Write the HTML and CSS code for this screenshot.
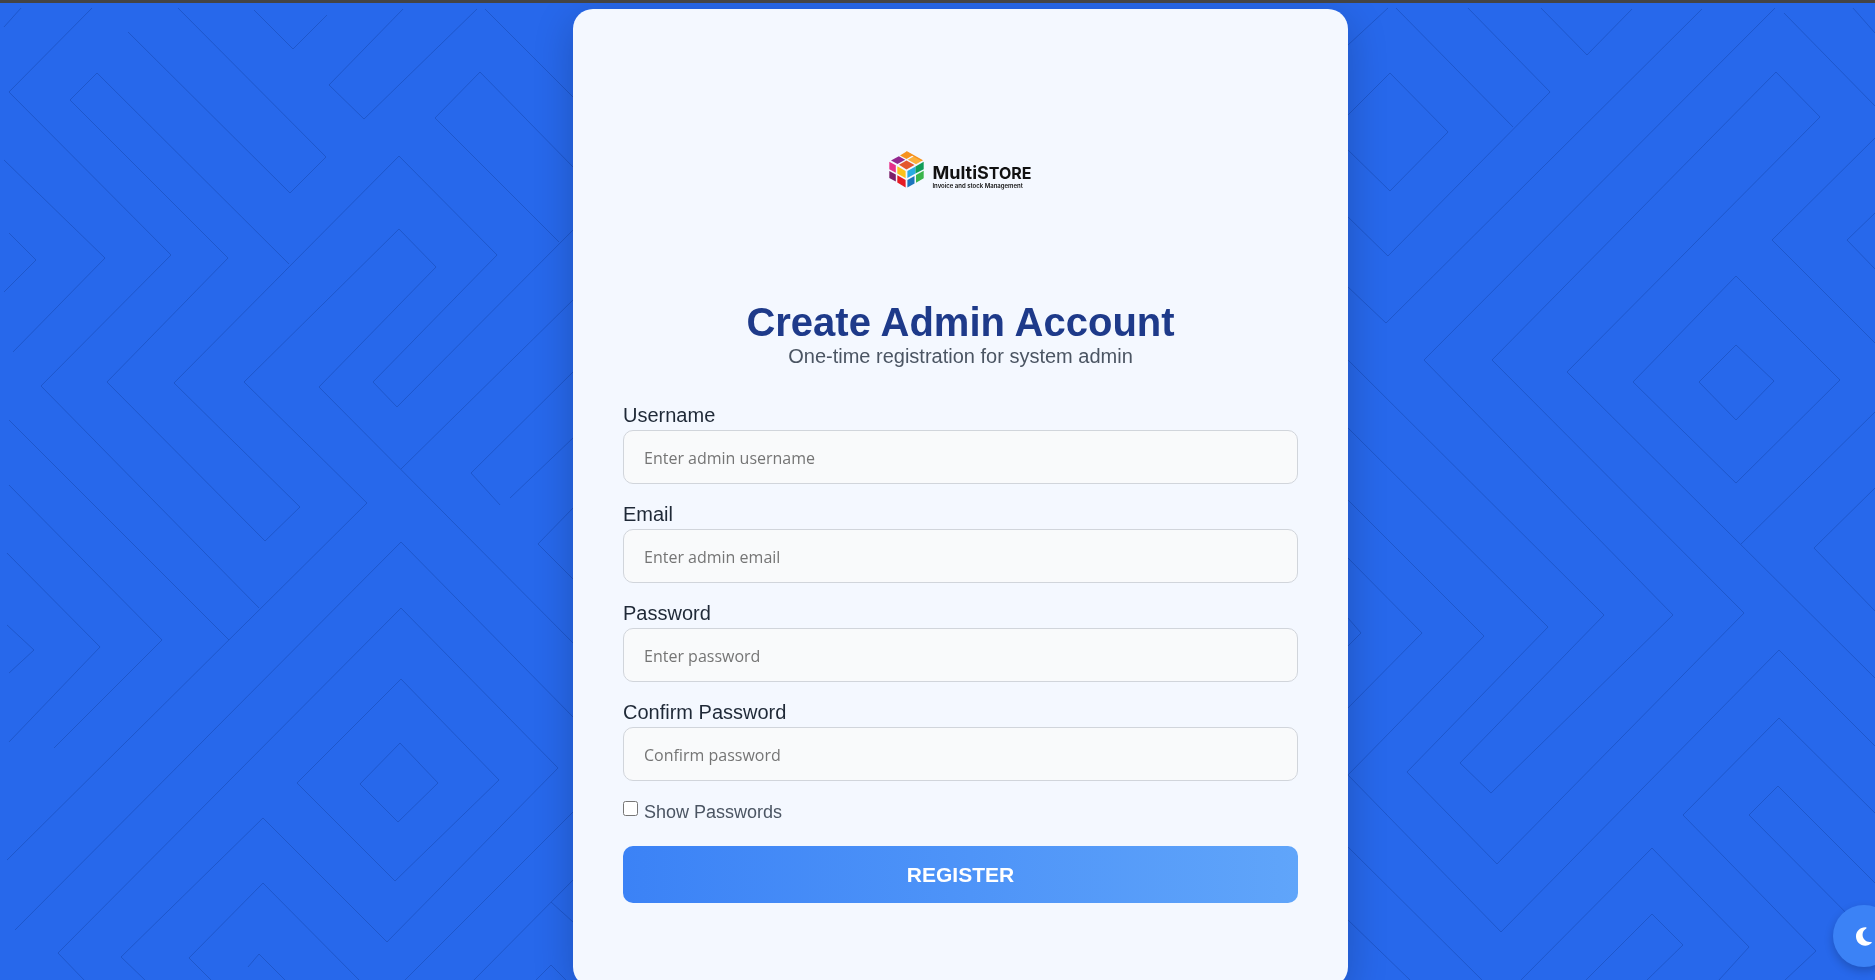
FILE: index.html
```
<!DOCTYPE html>
<html lang="en">
<head>
  <meta charset="UTF-8">
  <meta name="viewport" content="width=device-width, initial-scale=1.0">
  <title>Create Admin Account</title>
  <link rel="stylesheet" href="styles.css">
</head>
<body>
  <!-- Background maze pattern -->
  <svg class="pattern" viewBox="0 0 1875 980" preserveAspectRatio="xMidYMid slice" aria-hidden="true">
    <path d="M21 8L4 27M92 8L9 92L171 255L41 386L259 608M4 160L105 258L13 352M9 233L36 260L4 292"/>
    <path d="M289 264L97 73L70 100L228 258L107 382L265 541L300 507L174 383L399 156L497 255L373 382L397 407L573 230"/>
    <path d="M128 32L290 193L326 157L178 8M254 10L293 49L327 15M403 9L329 85L364 119L477 9M485 9L573 97"/>
    <path d="M573 167L480 72L435 118L559 242M573 643L319 387L436 267L399 229L244 382L367 503L7 860"/>
    <path d="M401 469L573 300M573 372L471 473L500 505M573 438L510 498"/>
    <path d="M9 485L162 640L54 748M9 420L229 640M7 553L100 647L9 742M7 625L34 650L9 673M15 930L401 542L573 717"/>
    <path d="M84 980L58 953L401 608L558 768L387 942L263 818L121 957L145 980"/>
    <path d="M401 679L499 780L395 881L297 783ZM400 743L438 783L398 822L360 784Z"/>
    <path d="M359 980L263 883L189 958L211 980M248 967L259 954L285 980M573 508L538 544L573 579M405 980L573 812"/>
    <path d="M474 980L573 880M551 902L573 922M536 980L551 965L566 980"/>
    <path d="M1348 45L1388 8M1396 8L1513 127M1468 8L1550 92L1388 256L1348 217M1348 115L1390 73L1448 132L1390 191L1348 150"/>
    <path d="M1541 8L1587 55L1632 9M1702 9L1386 323L1348 287"/>
    <path d="M1348 360L1604 615L1460 763L1491 793L1673 615L1424 360L1775 8"/>
    <path d="M1348 428L1548 627L1407 772L1497 864L1744 613L1492 360L1776 72L1820 117L1567 372L1875 678M1741 544L1875 412"/>
    <path d="M1736 276L1840 380L1736 483L1633 382ZM1736 345L1774 381L1736 420L1699 382Z"/>
    <path d="M1784 13L1875 106M1853 8L1875 33M1875 138L1772 240L1875 343M1875 213L1847 240L1875 269"/>
    <path d="M1348 500L1484 636L1348 775L1501 932L1779 650L1875 746M1348 558L1422 633L1348 708M1348 618L1361 633L1348 646"/>
    <path d="M1875 488L1814 548L1875 611M1875 813L1779 718L1683 815L1816 951L1785 980M1875 883L1778 786L1749 815L1875 942"/>
    <path d="M1348 847L1482 980M1348 920L1410 980M1521 980L1652 848L1749 947L1719 980M1586 980L1652 914L1683 945L1647 980"/>
  </svg>

  <main class="card">
    <div class="logo">
      <svg class="logo-mark" viewBox="0 0 35 38" aria-hidden="true">
        <!-- top face -->
        <path fill="#f6921e" d="M11 5.500L17.500 1.500L24 5.200L17.500 8.900Z"/>
        <path fill="#fbb03b" d="M18.800 9.700L25.300 6L33.500 10.600L27 14.200Z"/>
        <path fill="#93278f" d="M2 10.400L9.800 6.200L16.200 9.700L8.500 14Z"/>
        <path fill="#e4572e" d="M10 14.700L17.500 10.500L25.500 15L17.500 19.500Z"/>
        <path fill="#f6921e" d="M17 1.800L18 1.200L34 10.200L32.500 11L24 6.200Z"/>
        <!-- left face -->
        <path fill="#e6308a" d="M.3 11.700L6.800 15.300V22.700L.3 19.200Z"/>
        <path fill="#fcc21b" d="M8.300 16.200L16.600 20.900V28.200L8.300 23.500Z"/>
        <path fill="#7b1f6a" d="M.3 20.900L6.800 24.500V31.500L.3 28Z"/>
        <path fill="#e51b24" d="M8.300 25.300L16.600 30V37.500L8.300 32.600Z"/>
        <!-- right face -->
        <path fill="#29abe2" d="M18.400 20.900L26.500 16.400V23.600L18.400 28.100Z"/>
        <path fill="#0f9d58" d="M26.500 16.400L34.700 11.700V19.300L26.500 23.600Z"/>
        <path fill="#1c75bc" d="M18.400 29.900L25.500 26V33.500L18.400 37.500Z"/>
        <path fill="#39b54a" d="M27 25.100L34.700 20.800V28.200L27 32.700Z"/>
      </svg>
      <div class="logo-text">
        <span class="logo-name">MultiS<span class="logo-caps">TORE</span></span>
        <span class="logo-tagline">Invoice and stock Management</span>
      </div>
    </div>

    <h1>Create Admin Account</h1>
    <p class="subtitle">One-time registration for system admin</p>

    <form>
      <div class="field">
        <label for="username">Username</label>
        <input type="text" id="username" placeholder="Enter admin username">
      </div>
      <div class="field">
        <label for="email">Email</label>
        <input type="email" id="email" placeholder="Enter admin email">
      </div>
      <div class="field">
        <label for="password">Password</label>
        <input type="password" id="password" placeholder="Enter password">
      </div>
      <div class="field">
        <label for="confirmPassword">Confirm Password</label>
        <input type="password" id="confirmPassword" placeholder="Confirm password">
      </div>
      <div class="show-passwords">
        <input type="checkbox" id="showPasswords">
        <label for="showPasswords">Show Passwords</label>
      </div>
      <button type="submit" class="register">REGISTER</button>
    </form>
  </main>

  <button type="button" class="theme-toggle" aria-label="Toggle dark mode">
    <svg viewBox="0 0 384 512" aria-hidden="true">
      <path fill="currentColor" d="M223.500 32C100 32 0 132.300 0 256S100 480 223.500 480c60.600 0 115.500-24.200 155.800-63.400c5-4.900 6.300-12.500 3.100-18.700s-10.100-9.700-17-8.500c-9.800 1.700-19.800 2.600-30.100 2.600c-96.900 0-175.500-78.800-175.500-176c0-65.800 36-123.100 89.300-153.300c6.100-3.500 9.200-10.500 7.700-17.300s-7.300-11.900-14.300-12.500c-6.300-.5-12.600-.8-19-.8z"/>
    </svg>
  </button>

  <script>
    const passwordInputs = [
      document.getElementById('password'),
      document.getElementById('confirmPassword')
    ];

    document.getElementById('showPasswords').addEventListener('change', (e) => {
      passwordInputs.forEach(input => input.type = e.target.checked ? 'text' : 'password');
    });
  </script>
</body>
</html>
```
FILE: styles.css
```
* {
  box-sizing: border-box;
}
body {
  margin: 0;
  height: 100vh;
  overflow: hidden;
  padding: 6px 0 0 46px;
  border-top: 3px solid #444;
  background: #2768eb;
  font-family: "Liberation Sans", Arial, sans-serif;
}
.pattern {
  position: fixed;
  inset: 0;
  z-index: -1;
  width: 100%;
  height: 100%;
  fill: none;
  stroke: #1a4fbc;
  stroke-opacity: 0.65;
}
.card {
  max-width: 775px;
  margin: 0 auto;
  padding: 50px 50px 84px;
  border-radius: 20px;
  background: #f4f8ff;
  box-shadow: 0 10px 40px rgba(0, 0, 0, 0.2);
}

/* Logo */
.logo {
  display: flex;
  align-items: center;
  justify-content: center;
  gap: 8px;
  height: 220px;
  margin-bottom: 20px;
}
.logo-mark {
  width: 35px;
  height: 38px;
}
.logo-text {
  display: flex;
  flex-direction: column;
  padding-top: 16px;
  color: #111;
  font-family: Inter, sans-serif;
  font-weight: 700;
}
.logo-name {
  font-size: 18px;
  line-height: 18px;
}
.logo-caps {
  font-size: 16px;
}
.logo-tagline {
  font-size: 6px;
  font-weight: 600;
  line-height: 8px;
}

h1 {
  margin: 0;
  color: #1e3a8a;
  font-size: 40px;
  line-height: 46px;
  text-align: center;
}
.subtitle {
  margin: 0 0 36px;
  color: #4b5563;
  font-size: 20px;
  line-height: 23px;
  text-align: center;
}

/* Form */
.field {
  margin-bottom: 19px;
}
.field label {
  display: block;
  margin-bottom: 3px;
  color: #1f2937;
  font-size: 20px;
  line-height: 23px;
}
.field input {
  display: block;
  width: 100%;
  height: 54px;
  padding: 2px 20px 0;
  border: 1px solid #d1d5db;
  border-radius: 10px;
  background: #f9fafb;
  font-family: "Open Sans", sans-serif;
  font-size: 16px;
}
.field input::placeholder {
  color: #757575;
}
.show-passwords {
  display: flex;
  gap: 6px;
  height: 22px;
  margin-bottom: 24px;
  color: #4b5563;
  font-size: 18px;
  line-height: 24px;
}
.show-passwords input {
  width: 15px;
  height: 15px;
  margin: 1px 0 0;
}
.register {
  display: block;
  width: 100%;
  height: 57px;
  border: none;
  border-radius: 10px;
  background: linear-gradient(to right, #3b82f6, #60a5fa);
  color: #fff;
  font-family: inherit;
  font-size: 21px;
  font-weight: bold;
  cursor: pointer;
}

.theme-toggle {
  position: fixed;
  right: -20px;
  bottom: 13px;
  display: flex;
  align-items: center;
  justify-content: center;
  width: 62px;
  height: 62px;
  padding: 0;
  border: none;
  border-radius: 50%;
  background: #3b82f6;
  color: #fff;
  box-shadow: 0 4px 10px rgba(0, 0, 0, 0.2);
  cursor: pointer;
}
.theme-toggle svg {
  height: 21px;
}
```
